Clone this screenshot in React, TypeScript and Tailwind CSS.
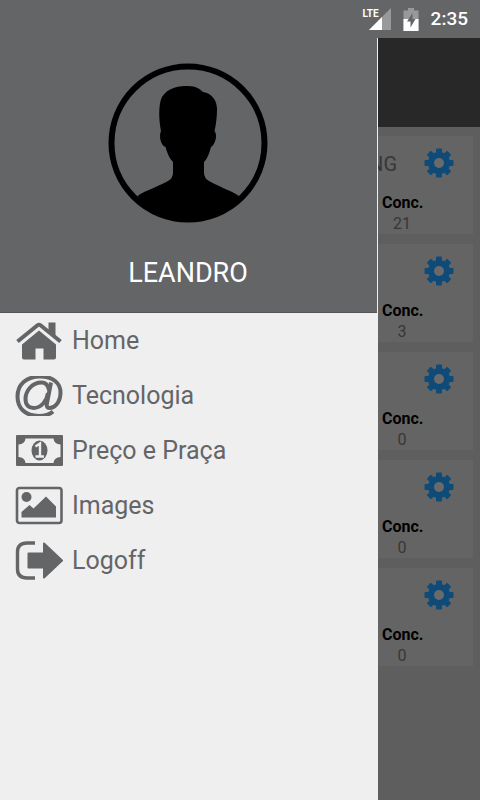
import type { ReactNode } from "react";

type MenuEntry = { label: string; icon: ReactNode };
type Card = { title?: string; count: number };

function Icon({ children }: { children: ReactNode }) {
  return (
    <svg viewBox="0 0 48 40" className="h-10 w-12 shrink-0 text-[#646567]" fill="currentColor" aria-hidden="true">
      {children}
    </svg>
  );
}

const menu: MenuEntry[] = [
  {
    label: "Home",
    icon: (
      <Icon>
        <path d="M33.5 1.5H40.5V16L33.5 10Z" />
        <path d="M2.5 20.5L22.5 4.3Q24 3.1 25.5 4.3L45.5 20.5" fill="none" stroke="currentColor" strokeWidth="4" />
        <path d="M24 9.5L41 23.5V36.5Q41 38.5 39 38.5H28.5V27.5H20.5V38.5H9Q7 38.5 7 36.5V23.5Z" />
      </Icon>
    ),
  },
  {
    label: "Tecnologia",
    icon: (
      <Icon>
        <g fill="none" stroke="currentColor">
          <path
            d="M38 35.500C34 39 29 40 24 40C10 40 2.500 32 2.500 20.500C2.500 8 12 0.500 25 0.500C38 0.500 45.500 7 45.500 16.500C45.500 27 39 32 34.500 32C31.500 32 31.500 29.500 32 27L36 6.500"
            strokeWidth="4"
          />
          <path d="M34 14C33 9 30 6.500 26.500 6.500C17 6.500 10.500 15 10.500 23C10.500 29 14 32 18.500 32C26 32 32 25 33 17" strokeWidth="4" />
        </g>
      </Icon>
    ),
  },
  {
    label: "Preço e Praça",
    icon: (
      <Icon>
        <path
          fillRule="evenodd"
          d="M2 4H47Q48 4 48 5V34Q48 35 47 35H2Q1 35 1 34V5Q1 4 2 4ZM10.500 7.500Q10 13 3.500 13.500V26Q10 26.500 10.500 32H38.500Q39 26.500 45.500 26V13.500Q39 13 38.500 7.500Z"
        />
        <ellipse cx="24.500" cy="19.500" rx="8" ry="10" />
        <path d="M20.500 15.500L25 12.500V25.500M20.500 25.500H29" fill="none" stroke="#efefef" strokeWidth="2.400" />
      </Icon>
    ),
  },
  {
    label: "Images",
    icon: (
      <Icon>
        <rect x="2" y="2" width="44.500" height="35" rx="2.500" fill="none" stroke="currentColor" strokeWidth="2.600" />
        <circle cx="11.500" cy="11" r="5" />
        <path d="M6.500 31.500V26L14.500 19L18.500 22.500L31 10.500L41 20.500V31.500Z" />
      </Icon>
    ),
  },
  {
    label: "Logoff",
    icon: (
      <Icon>
        <path d="M20 2H12Q2.500 2 2.500 11V28Q2.500 37 12 37H20" fill="none" stroke="currentColor" strokeWidth="3.400" />
        <path
          d="M13.500 12.500H29V2.500L47 19.500L29 36.500V26.500H13.500Z"
          stroke="currentColor"
          strokeWidth="2"
          strokeLinejoin="round"
        />
      </Icon>
    ),
  },
];

const cards: Card[] = [{ title: "NG", count: 21 }, { count: 3 }, { count: 0 }, { count: 0 }, { count: 0 }];

function Gear() {
  return (
    <svg viewBox="-15 -15 30 30" className="size-[30px]" aria-hidden="true">
      <g fill="#0f4b78">
        <circle r="11" />
        <rect x="-3" y="-14.500" width="6" height="29" rx="1" />
        <rect x="-3" y="-14.500" width="6" height="29" rx="1" transform="rotate(45)" />
        <rect x="-3" y="-14.500" width="6" height="29" rx="1" transform="rotate(90)" />
        <rect x="-3" y="-14.500" width="6" height="29" rx="1" transform="rotate(135)" />
      </g>
      <circle r="5" fill="#6a6a6a" />
    </svg>
  );
}

function StatusBar() {
  return (
    <header className="flex h-[38px] shrink-0 items-center justify-end bg-[#646567] pr-3 text-white">
      <span className="self-start pt-2 font-['Liberation_Sans_Narrow','Roboto',sans-serif] text-[10px] leading-[12px] font-bold">LTE</span>
      <svg viewBox="0 0 22 22" className="-ml-[10px] size-[22px]" aria-hidden="true">
        <path d="M22 0V22H0Z" fill="#98999a" />
        <path d="M13 9V22H0Z" fill="#fff" />
      </svg>
      <svg viewBox="0 0 16 24" className="ml-3 h-6 w-4" aria-hidden="true">
        <path d="M5 1H11V3.500H15.500V24H0.500V3.500H5Z" fill="#98999a" />
        <path d="M0.500 12H15.500V24H0.500Z" fill="#fff" />
        <path d="M9.500 6L4 14.500H7.500V20.500L12.500 12H9.500Z" fill="#646567" />
      </svg>
      <time className="ml-3 text-[19px] leading-6 font-medium">2:35</time>
    </header>
  );
}

export default function App() {
  return (
    <div className="flex min-h-screen flex-col bg-[#5e5e5e] font-['Roboto',sans-serif]">
      <StatusBar />
      <div className="flex flex-1">
        <aside className="w-[79%] max-w-[378px] shrink-0 bg-[#efefef]">
          <div className="mr-px flex h-[275px] flex-col items-center border-b border-[#585455] bg-[#646567] pt-[25px] pr-px">
            <svg viewBox="0 0 160 160" className="size-40" role="img" aria-label="Avatar">
              <circle cx="80" cy="80" r="76.500" fill="none" stroke="#000" strokeWidth="6" />
              <path d="M29.500 133C38 127 52 123 60 118Q65 115 65 110V99C61 95 59 89 57.500 84C52 82 51 72 53 68C51 58 50 42 54 34C60 24 72 23 80 23C88 23 92 26 95 29C104 30 109 38 109 46C109 54 108 62 106.500 68C110 72 107 82 103 84C101.500 89 100 95 96 99V110Q96 115 101 118C109 123 122 127 131 133C118 149 100 159 80 159C60 159 42 149 29.500 133Z" />
            </svg>
            <h1 className="mt-[34px] text-[27px] leading-8 text-white">LEANDRO</h1>
          </div>
          <nav>
            {menu.map(({ label, icon }) => (
              <a key={label} href="#" className="flex h-[55px] items-center gap-2 pl-[15px] text-[25px] leading-8 text-[#646567]">
                {icon}
                <span className="pt-px pl-px">{label}</span>
              </a>
            ))}
          </nav>
        </aside>
        <main className="min-w-0 flex-1 overflow-hidden">
          <div className="h-[89px] bg-[#282828]" />
          <div className="flex flex-col gap-[10px] pt-[9px] pr-[7px]">
            {cards.map(({ title, count }, i) => (
              <section key={i} className="h-[98px] bg-[#646464] pt-3">
                <div className="flex items-center justify-end gap-[27px] pr-[19px]">
                  {title && <h2 className="pt-[3px] text-[20px] leading-[27px] text-[#373737]">{title}</h2>}
                  <button type="button" aria-label="Opções" className="block">
                    <Gear />
                  </button>
                </div>
                <dl className="mt-[14px] mr-[51px] ml-auto w-10 text-center text-[16px] leading-[21px]">
                  <dt className="font-bold text-black">Conc.</dt>
                  <dd className="text-[#373737]">{count}</dd>
                </dl>
              </section>
            ))}
          </div>
        </main>
      </div>
    </div>
  );
}
